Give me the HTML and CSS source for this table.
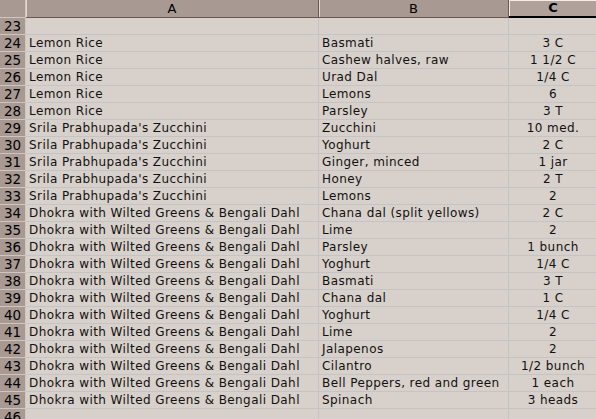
FILE: index.html
```html
<!DOCTYPE html>
<html>
<head>
<meta charset="utf-8">
<link rel="stylesheet" href="styles.css">
</head>
<body>
<table class="sheet">
  <colgroup>
    <col class="c-rh"><col class="c-a"><col class="c-b"><col class="c-c">
  </colgroup>
  <thead>
    <tr>
      <th class="corner"></th>
      <th class="colh">A</th>
      <th class="colh">B</th>
      <th class="colh sel">C</th>
    </tr>
  </thead>
  <tbody>
    <tr><th class="rowh">23</th><td></td><td></td><td class="q"></td></tr>
    <tr><th class="rowh">24</th><td>Lemon Rice</td><td>Basmati</td><td class="q">3 C</td></tr>
    <tr><th class="rowh">25</th><td>Lemon Rice</td><td>Cashew halves, raw</td><td class="q">1 1/2 C</td></tr>
    <tr><th class="rowh">26</th><td>Lemon Rice</td><td>Urad Dal</td><td class="q">1/4 C</td></tr>
    <tr><th class="rowh">27</th><td>Lemon Rice</td><td>Lemons</td><td class="q">6</td></tr>
    <tr><th class="rowh">28</th><td>Lemon Rice</td><td>Parsley</td><td class="q">3 T</td></tr>
    <tr><th class="rowh">29</th><td>Srila Prabhupada's Zucchini</td><td>Zucchini</td><td class="q">10 med.</td></tr>
    <tr><th class="rowh">30</th><td>Srila Prabhupada's Zucchini</td><td>Yoghurt</td><td class="q">2 C</td></tr>
    <tr><th class="rowh">31</th><td>Srila Prabhupada's Zucchini</td><td>Ginger, minced</td><td class="q">1 jar</td></tr>
    <tr><th class="rowh">32</th><td>Srila Prabhupada's Zucchini</td><td>Honey</td><td class="q">2 T</td></tr>
    <tr><th class="rowh">33</th><td>Srila Prabhupada's Zucchini</td><td>Lemons</td><td class="q">2</td></tr>
    <tr><th class="rowh">34</th><td>Dhokra with Wilted Greens &amp; Bengali Dahl</td><td>Chana dal (split yellows)</td><td class="q">2 C</td></tr>
    <tr><th class="rowh">35</th><td>Dhokra with Wilted Greens &amp; Bengali Dahl</td><td>Lime</td><td class="q">2</td></tr>
    <tr><th class="rowh">36</th><td>Dhokra with Wilted Greens &amp; Bengali Dahl</td><td>Parsley</td><td class="q">1 bunch</td></tr>
    <tr><th class="rowh">37</th><td>Dhokra with Wilted Greens &amp; Bengali Dahl</td><td>Yoghurt</td><td class="q">1/4 C</td></tr>
    <tr><th class="rowh">38</th><td>Dhokra with Wilted Greens &amp; Bengali Dahl</td><td>Basmati</td><td class="q">3 T</td></tr>
    <tr><th class="rowh">39</th><td>Dhokra with Wilted Greens &amp; Bengali Dahl</td><td>Chana dal</td><td class="q">1 C</td></tr>
    <tr><th class="rowh">40</th><td>Dhokra with Wilted Greens &amp; Bengali Dahl</td><td>Yoghurt</td><td class="q">1/4 C</td></tr>
    <tr><th class="rowh">41</th><td>Dhokra with Wilted Greens &amp; Bengali Dahl</td><td>Lime</td><td class="q">2</td></tr>
    <tr><th class="rowh">42</th><td>Dhokra with Wilted Greens &amp; Bengali Dahl</td><td>Jalapenos</td><td class="q">2</td></tr>
    <tr><th class="rowh">43</th><td>Dhokra with Wilted Greens &amp; Bengali Dahl</td><td>Cilantro</td><td class="q">1/2 bunch</td></tr>
    <tr><th class="rowh">44</th><td>Dhokra with Wilted Greens &amp; Bengali Dahl</td><td>Bell Peppers, red and green</td><td class="q">1 each</td></tr>
    <tr><th class="rowh">45</th><td>Dhokra with Wilted Greens &amp; Bengali Dahl</td><td>Spinach</td><td class="q">3 heads</td></tr>
    <tr><th class="rowh">46</th><td></td><td></td><td class="q"></td></tr>
  </tbody>
</table>
</body>
</html>
```
FILE: styles.css
```css
html, body {
  margin: 0;
  padding: 0;
  background: #d8d0ca;
  overflow: hidden;
}
.sheet {
  border-collapse: separate;
  border-spacing: 0;
  table-layout: fixed;
  width: 597px;
  font-family: "DejaVu Sans", Verdana, sans-serif;
  font-size: 12px;
  color: #000;
}
.c-rh { width: 26px; }
.c-a { width: 293px; }
.c-b { width: 190px; }
.c-c { width: 88px; }

.sheet th, .sheet td {
  padding: 0;
  overflow: hidden;
  white-space: nowrap;
  box-sizing: border-box;
}
.corner, .colh {
  height: 17px;
  background: #a89a92;
  border-bottom: 1px solid #6a564f;
  border-right: 1px solid #6a564f;
  font-weight: normal;
  font-size: 13px;
  line-height: 16px;
  text-align: center;
}
.corner {
  border-bottom: 1px solid #cfc6c0;
  border-right: 1px solid #cfc6c0;
}
.colh {
  box-shadow: inset 1px 0 0 #e8d8d0;
}
.colh.sel {
  background: #b0a29a;
  font-weight: bold;
  border-bottom: 2px solid #000;
  border-right: none;
  box-shadow: inset 1px 1px 0 #f4ece8;
}
.rowh {
  height: 17px;
  background: #a89a92;
  border-right: 1px solid #cfc6c0;
  border-bottom: 1px solid #cfc6c0;
  font-weight: normal;
  font-size: 13.5px;
  line-height: 16px;
  text-align: center;
}
.sheet td {
  height: 17px;
  border-right: 1px solid #c2c4c6;
  border-bottom: 1px solid #c2c4c6;
  padding-left: 3px;
  line-height: 16px;
  letter-spacing: 0.42px;
  color: #111;
}
.sheet td.q {
  text-align: center;
  padding-left: 0;
  border-right: none;
}
```
